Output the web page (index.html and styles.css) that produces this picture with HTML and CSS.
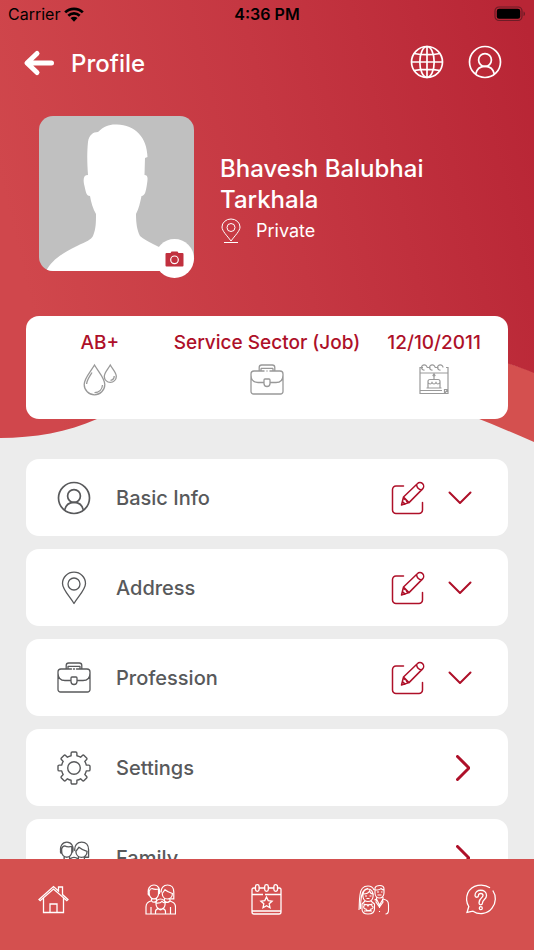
FILE: index.html
```html
<!DOCTYPE html>
<html lang="en">
<head>
<meta charset="utf-8">
<meta name="viewport" content="width=device-width, initial-scale=1">
<title>Profile</title>
<link rel="stylesheet" href="styles.css">
</head>
<body>
<svg class="symbols" aria-hidden="true">
  <symbol id="user" viewBox="0 0 34 34">
    <g stroke-width="1.700"><circle cx="17" cy="17" r="15.500"/><circle cx="17" cy="15" r="6.400"/>
    <path d="M7.600 29.200C8.600 24.600 12 21.400 17 21.400s8.400 3.200 9.400 7.800"/></g>
  </symbol>
  <symbol id="briefcase" viewBox="0 0 34 34">
    <path stroke-width="1.300" d="M9.200 8V4.500a2.500 2.500 0 0 1 2.500-2.500h10.600a2.500 2.500 0 0 1 2.500 2.500V8M11 5.300h12M11 5.300V8M23 5.300V8M14.500 8H4a3 3 0 0 0-3 3v17.500a2.500 2.500 0 0 0 2.500 2.500h27a2.500 2.500 0 0 0 2.500-2.500V11a3 3 0 0 0-3-3H19.500M16.500 8h1M1 12c0 5 3 7.500 7 7.500h6M20 19.500h6c4 0 7-2.500 7-7.500M14 17a1 1 0 0 1 1-1h4a1 1 0 0 1 1 1v3.500a3 3 0 0 1-6 0z"/>
  </symbol>
  <symbol id="edit" viewBox="0 0 34 34">
    <path stroke-width="1.500" d="M12.500 5H5a3.500 3.500 0 0 0-3.500 3.500V29A3.500 3.500 0 0 0 5 32.500h23a3.500 3.500 0 0 0 3.500-3.500v-7.500M10.500 24l2-8L26.300 2.700a3.700 3.700 0 0 1 5.300 5.200L18 21.600zM12.500 16l5.500 5.600M25.500 3.500c.3 3 2.200 5 5.300 5.500M11.400 20.500l2.700 2.600M12.500 16c.2 2 .8 2.700 2.700 2.700.2 2 .9 2.700 2.800 2.900"/>
  </symbol>
  <symbol id="down" viewBox="0 0 24 14"><path d="M1.500 1.500 12 12 22.500 1.500"/></symbol>
  <symbol id="right" viewBox="0 0 14 26"><path d="M1.500 1.500 13 13 1.500 24.500"/></symbol>
  <symbol id="family" viewBox="0 0 31 31">
    <path stroke-width="1.200" d="M3.500 10C2.300 5 4.800 1 9 1s6.500 4 5.300 9M4.200 7.200C5 5 6 4.500 7 4.500c2 1 4.500 1 6.500.500v5c0 2.500-2 4.800-4.600 4.800S4.300 12.500 4.300 10zM4 8.500c-1.200.3-1.200 2.500.3 2.800M16.200 8.500C15.800 4 18.500 1 22.500 1S28.800 4 28.800 8v6.800h-3M17.200 9.500 20 5.700c2 1.700 5 3 7.400 3.800 0 3-2 5.500-5 5.500s-5-2.500-5.200-5.500M6.500 14v2.800C3 18 1 19 1 23v7h5v-7M6.500 16.800C8 18.800 10 18.500 11.500 17M11.500 14v3M19.500 14.500V17c1.500 1.800 3.800 1.800 5.500 0v-2.500M25 17c3.500 1 5.500 2.500 5.500 6v7h-5v-7M11 20c-.3-3 1.500-5 4.500-5s4.900 2 4.600 5c-.1 3-2 5-4.600 5s-4.300-2-4.500-5M11.500 19c2.500.2 4.500-.5 5.500-1.700.8 1 1.700 1.600 3 1.700M10.500 30v-2.500c0-1.500 1.500-2.500 3-2.800 1 1.500 3 1.500 4 0 1.700.3 3 1.300 3 2.800V30M6 30h19.500"/>
  </symbol>
</svg>

<main class="screen">
  <svg class="backdrop" viewBox="0 0 534 460" preserveAspectRatio="none" aria-hidden="true">
    <defs>
      <linearGradient id="red" gradientUnits="userSpaceOnUse" x1="0" y1="180" x2="534" y2="50">
        <stop offset="0" stop-color="#d0474c"/><stop offset=".5" stop-color="#c53742"/><stop offset="1" stop-color="#b82535"/>
      </linearGradient>
    </defs>
    <path class="swell" d="M300 330C380 325 450 342 534 372V442C500 427 470 415 430 400Z"/>
    <path d="M0 0H534V373C490 355 420 338 340 345C230 355 160 391 97 419C68 432 34 438 0 438Z" fill="url(#red)"/>
  </svg>

  <div class="status">
    <span class="carrier">Carrier
      <svg width="20" height="15" viewBox="0 0 20 15" aria-hidden="true"><path d="M1.200 5.400C6 .6 14 .6 18.800 5.400M4.300 8.700c3.200-3 8.200-3 11.400 0" fill="none" stroke="#000" stroke-width="2.700"/><path d="M6.500 11.100c2-1.800 5-1.800 7 0L10 14.700z"/></svg>
    </span>
    <span class="clock">4:36 PM</span>
    <svg class="battery" width="32" height="16" viewBox="0 0 32 16" aria-hidden="true"><rect x="1" y="1" width="27" height="13.500" rx="4" fill="none" stroke="#6d1c26" stroke-width="1.200"/><rect x="2.800" y="2.800" width="23.400" height="10" rx="2.300"/><path d="M29.500 5.500c2 .6 2 4 0 4.600z" fill="#6d1c26"/></svg>
  </div>

  <header class="toolbar">
    <button class="plain" aria-label="Back"><svg width="32" height="28" viewBox="0 0 32 28" fill="none" stroke="#fff" stroke-width="5" stroke-linecap="round" stroke-linejoin="round"><path d="M14 4.500 4 14l10 9.500M5 14h23.500"/></svg></button>
    <h1>Profile</h1>
    <div class="actions">
      <button class="plain" aria-label="Language"><svg width="34" height="34" viewBox="0 0 34 34"><g stroke-width="1.700"><circle cx="17" cy="17" r="15.500"/><ellipse cx="17" cy="17" rx="7.200" ry="15.500"/><path d="M17 1.500v31M1.500 17h31M4 8.500c8 1.500 18 1.500 26 0M4 25.500c8-1.500 18-1.500 26 0"/></g></svg></button>
      <button class="plain" aria-label="Account"><svg width="34" height="34"><use href="#user"/></svg></button>
    </div>
  </header>

  <section class="person">
    <div class="photo">
      <svg class="portrait" viewBox="0 0 155 155" role="img" aria-label="Profile photo"><path fill="#c0c0c0" d="M0 0h155v155H0z"/><path fill="#fff" d="M7 155C13 144 22 138 38 130C48 125 52 124 54 120C57 113 57 106 57 98C54 93 52 86 51 80C47 80 47 76 45 68C44 62 45 59 49 59C48 46 48 35 49 26C50 19 54 16 59 16C65 10 71 8 78 8.500C96 9 108 21 108.500 41L106 42L105.500 59C109 59 109 62 108 68C107 75 106 80 102.500 80C101 87 100 92 97 98C97 107 98 114 101 120C108 126 120 130 131 137V155Z"/></svg>
      <button class="camera" aria-label="Change photo"><svg width="19" height="16" viewBox="0 0 19 16"><path fill="#c1303e" d="M1.500 2h4L6.500.500h6L13.500 2h4a1 1 0 0 1 1 1v11.500a1 1 0 0 1-1 1h-16a1 1 0 0 1-1-1V3a1 1 0 0 1 1-1z"/><circle cx="9.500" cy="8.800" r="3.800" fill="none" stroke="#fff" stroke-width="1.200"/></svg></button>
    </div>
    <div class="identity">
      <h2>Bhavesh Balubhai Tarkhala</h2>
      <p><svg class="thin" width="22" height="26" viewBox="0 0 22 26"><path d="M11 23C7 17.500 2 13 2 9a9 8 0 0 1 18 0c0 4-5 8.500-9 14zM4 24.500h14"/><circle cx="11" cy="9.500" r="4"/></svg>Private</p>
    </div>
  </section>

  <section class="stats">
    <div><span>AB+</span><svg width="34" height="34" viewBox="0 0 34 34"><path stroke-width="1.300" d="M11.500 2C7.500 9 1.200 15 1.200 21.500a10.300 10.300 0 0 0 20.600 0C21.800 15 15.500 9 11.500 2zM9 9.500C6.500 13.500 3.600 17.500 3.600 21M19.500 22c-.3 4.500-3.500 7.500-8 7.700M27.300 2c-2.500 4.500-6 7.500-6 11.400a6 6 0 0 0 12 0c0-3.900-3.500-6.900-6-11.400zM31.200 13c0 2.600-1.500 4-3.700 4.300"/></svg></div>
    <div><span>Service Sector (Job)</span><svg width="34" height="34"><use href="#briefcase"/></svg></div>
    <div><span>12/10/2011</span><svg width="34" height="34" viewBox="0 0 34 34"><path stroke-width="1.200" d="M6 4.500H3v26h24.500l3.500-4V4.500h-2M10 4.500h3.500M18 4.500h3.500M3 10h28M3 27.500h22M27.500 30.500v-4H31M3 30.500h28v-4M7.500 7.200A2.700 2.700 0 1 1 10 4.500M15.500 7.200A2.700 2.700 0 1 1 18 4.500M23.500 7.200A2.700 2.700 0 1 1 26 4.500M11 25v-6.500a2 2 0 0 1 2-2h8a2 2 0 0 1 2 2V25zM9.500 25h15M11 19.500c1.500 2 3 2 4 0 1 2 3 2 4 0 1 2 2.500 2 4 0M17 16.500V14M17 11l-1 1.500 1 1 1-1z"/></svg></div>
  </section>

  <div class="list">
    <section class="item"><svg class="lead"><use href="#user"/></svg><h3>Basic Info</h3>
      <button class="plain" aria-label="Edit basic info"><svg class="edit"><use href="#edit"/></svg></button>
      <button class="plain" aria-label="Expand basic info"><svg class="down"><use href="#down"/></svg></button></section>
    <section class="item"><svg class="lead" viewBox="0 0 34 34"><g stroke-width="1.300"><path d="M17 32.500C12.500 25 5.500 18.500 5.500 12.500a11.500 11.300 0 0 1 23 0C28.500 18.500 21.500 25 17 32.500z"/><circle cx="17" cy="13" r="6"/></g></svg><h3>Address</h3>
      <button class="plain" aria-label="Edit address"><svg class="edit"><use href="#edit"/></svg></button>
      <button class="plain" aria-label="Expand address"><svg class="down"><use href="#down"/></svg></button></section>
    <section class="item"><svg class="lead"><use href="#briefcase"/></svg><h3>Profession</h3>
      <button class="plain" aria-label="Edit profession"><svg class="edit"><use href="#edit"/></svg></button>
      <button class="plain" aria-label="Expand profession"><svg class="down"><use href="#down"/></svg></button></section>
    <a class="item" href="#settings"><svg class="lead" viewBox="0 0 34 34"><g stroke-width="1.400"><circle cx="17" cy="17" r="6.300"/><path d="M15.300 1h3.400a1.200 1.200 0 0 1 1.200 1.200v2.500a13 13 0 0 1 3.700 1.500l1.800-1.800a1.200 1.200 0 0 1 1.700 0l2.500 2.500a1.200 1.200 0 0 1 0 1.700l-1.800 1.800a13 13 0 0 1 1.500 3.700h2.500a1.200 1.200 0 0 1 1.200 1.200v3.400a1.200 1.200 0 0 1-1.200 1.200h-2.500a13 13 0 0 1-1.500 3.700l1.800 1.800a1.200 1.200 0 0 1 0 1.700l-2.500 2.500a1.200 1.200 0 0 1-1.700 0l-1.800-1.800a13 13 0 0 1-3.700 1.500v2.500a1.200 1.200 0 0 1-1.200 1.200h-3.400a1.200 1.200 0 0 1-1.200-1.200v-2.500a13 13 0 0 1-3.700-1.500l-1.800 1.800a1.200 1.200 0 0 1-1.700 0l-2.500-2.500a1.200 1.200 0 0 1 0-1.700l1.800-1.800a13 13 0 0 1-1.500-3.700H2.200A1.200 1.200 0 0 1 1 18.700v-3.400a1.200 1.200 0 0 1 1.200-1.200h2.500a13 13 0 0 1 1.500-3.700L4.400 8.600a1.200 1.200 0 0 1 0-1.700l2.500-2.500a1.200 1.200 0 0 1 1.700 0l1.800 1.800a13 13 0 0 1 3.700-1.500V2.200A1.200 1.200 0 0 1 15.300 1z"/></g></svg><h3>Settings</h3><svg class="right"><use href="#right"/></svg></a>
    <a class="item" href="#family-members"><svg class="lead"><use href="#family"/></svg><h3>Family</h3><svg class="right"><use href="#right"/></svg></a>
  </div>
</main>

<nav class="tabs" aria-label="Main">
  <a href="#home" aria-label="Home"><svg viewBox="0 0 31 31"><path stroke-width="1.300" d="M1 15.500 15.500 2.500 20.500 7V3h4v7.600L30 15.500l-1.200 1.200L15.500 5 2.200 16.700zM5.500 14v14.500h20V14M12 28.500V20h7v8.500M20 3h5"/></svg></a>
  <a href="#family" aria-label="Family"><svg><use href="#family"/></svg></a>
  <a href="#events" aria-label="Events"><svg viewBox="0 0 31 31"><path stroke-width="1.300" d="M4.500 4H2.500A1.500 1.500 0 0 0 1 5.500V28a2 2 0 0 0 2 2h25a2 2 0 0 0 2-2V5.500A1.500 1.500 0 0 0 28.500 4h-2M8.500 4h5M17.500 4h5M1 10.500h11M14 10.500h16M1 27h29M4.500 2.500a1.800 1.800 0 0 1 3.600 0v3a1.800 1.800 0 0 1-3.600 0zM13.700 2.500a1.800 1.800 0 0 1 3.600 0v3a1.800 1.800 0 0 1-3.600 0zM22.900 2.500a1.800 1.800 0 0 1 3.600 0v3a1.800 1.800 0 0 1-3.600 0zM15.500 13l1.700 3.600 3.900.5-2.900 2.700.8 3.900-3.500-1.900-3.500 1.900.8-3.900-2.900-2.700 3.900-.5z"/></svg></a>
  <a href="#matrimony" aria-label="Matrimony"><svg viewBox="0 0 31 31"><path stroke-width="1.100" d="M1 26c.5-5 0-9 1-15C2.500 5 5 2 10 2c3 0 5 1.500 6 4M2.500 25V20c1-6 0-14 7.500-15.500M5 13c-1-5 2-8 5-8s6 3 5 8c-.5 3-2.500 4.500-5 4.500S5.500 16 5 13zM5.500 10c3 0 5-1 6-3 .5 1.700 1.500 2.700 3.300 3M7 12h2M11.500 12h2M8.500 14.500h3M7 17l-3 3v5c0 3 2 5 6 5s6.500-2 6.500-5v-5L13 17M5.500 20c2 1 7 1 9 0M6 22c0-2 3-2 4 0 1-2 4-2 4 0 2 1 1 3-1 3 0 2-5 2-5 0-2 0-3-2-2-3zM6 27h8M17 4c1-3 9-4 9 1v4c0 3-2 5-4.500 5S17 12 17 9zM17 6c3 0 5 0 6-1.500 1 1 2 1.500 3 1.500M19 8h2M23 8h1.500M19.500 11h4M18.500 13.500V15l3 6 3.500-6v-2M18.500 15l-2 1M25 15c4 1 5.500 2 5.500 6v5c0 2-1 4-3 4M18.500 15l-.5 3 3.500 5 3.500-5-.5-3M21.500 23v1M21.500 27v1"/></svg></a>
  <a href="#help" aria-label="Help"><svg viewBox="0 0 31 31"><g stroke-width="1.300"><path d="M25 3.800C18 -1 7 .5 2.800 9c-2 5-1.500 9.500 1 13.500L2 28.500l6-1.300c6 4 14.500 3 19-3 4.300-5.500 4.300-12.500.8-17.700M10 11.500c0-7 11.500-7 11.500 0 0 4-4 4-4 7.500 0 2.400-3.500 2.400-3.500 0 0-5.500 4-5 4-7.500 0-2.700-4.500-2.700-4.500 0 0 2.300-3.500 2.300-3.500 0z"/><circle cx="15.800" cy="24.200" r="1.500"/></g></svg></a>
</nav>
</body>
</html>
```
FILE: styles.css
```css
* { box-sizing: border-box; }
body {
  margin: 0;
  height: 100vh;
  display: flex;
  flex-direction: column;
  background: #ececec;
  color: #58595b;
  font-family: Inter, "Liberation Sans", sans-serif;
}
h1, h2, h3, p { margin: 0; font-weight: 500; }
svg { display: block; flex: none; }
.symbols { position: absolute; width: 0; height: 0; }
.screen { position: relative; isolation: isolate; flex: 1; min-height: 0; overflow: hidden; }
.backdrop { position: absolute; z-index: -1; top: 0; left: 0; width: 100%; height: 460px; }
.swell { fill: #d4504f; }
.plain { padding: 0; border: 0; background: none; }

.status {
  display: grid;
  grid-template-columns: 1fr auto 1fr;
  align-items: center;
  height: 28px;
  padding: 0 8px;
  color: #000;
  font-size: 16px;
}
.carrier { display: flex; align-items: center; gap: 4px; }
.clock { font-weight: 600; }
.battery { justify-self: end; }

.toolbar {
  display: flex;
  align-items: center;
  height: 70px;
  padding: 0 32px 0 23px;
  color: #fff;
}
.toolbar h1 { flex: 1; margin-left: 16px; font-size: 24px; }
.actions { display: flex; gap: 24px; padding-bottom: 3px; }
.actions svg { fill: none; stroke: #fff; }

.person { display: flex; align-items: center; gap: 26px; margin: 18px 39px 0; }
.photo { position: relative; flex: none; width: 155px; }
.portrait { width: 155px; height: 155px; border-radius: 14px; }
.camera {
  position: absolute;
  right: 0;
  bottom: -7px;
  display: grid;
  place-items: center;
  width: 39px;
  height: 39px;
  padding: 0;
  border: 0;
  border-radius: 50%;
  background: #fff;
}
.identity { padding-top: 12px; color: #fff; }
.identity h2 { max-width: 240px; font-size: 24px; line-height: 31px; }
.identity p { display: flex; align-items: center; gap: 14px; height: 32px; font-size: 18px; font-weight: 400; }
.thin { fill: none; stroke: #fff; stroke-width: 1px; }

.stats {
  display: flex;
  justify-content: space-evenly;
  margin: 45px 26px 0;
  padding: 14px 0 22px;
  border-radius: 13px;
  background: #fff;
}
.stats div { display: flex; flex-direction: column; align-items: center; gap: 7px; min-width: 94px; }
.stats span { color: #ae1029; font-size: 19px; font-weight: 500; line-height: 26px; white-space: nowrap; }
.stats svg { fill: none; stroke: #999; }

.list { display: flex; flex-direction: column; gap: 13px; margin: 40px 26px 0; }
.item {
  display: flex;
  align-items: center;
  height: 77px;
  padding: 0 36px 0 31px;
  border-radius: 13px;
  background: #fff;
  color: inherit;
  text-decoration: none;
}
.item h3 { flex: 1; margin-left: 25px; font-size: 20px; }
.item svg { fill: none; stroke: #ae1029; stroke-width: 2px; stroke-linecap: round; stroke-linejoin: round; }
.item .lead { width: 34px; height: 34px; stroke: #58595b; }
.item .edit { width: 34px; height: 34px; margin-right: 23px; }
.item .down { width: 24px; height: 14px; }
.item .right { width: 14px; height: 26px; margin-right: 2px; stroke-width: 3px; }

.tabs {
  display: flex;
  height: 91px;
  padding-top: 25px;
  background: #d4504f;
}
.tabs a { flex: 1; display: flex; justify-content: center; }
.tabs svg { width: 31px; height: 31px; fill: none; stroke: #fff; overflow: visible; }
```
